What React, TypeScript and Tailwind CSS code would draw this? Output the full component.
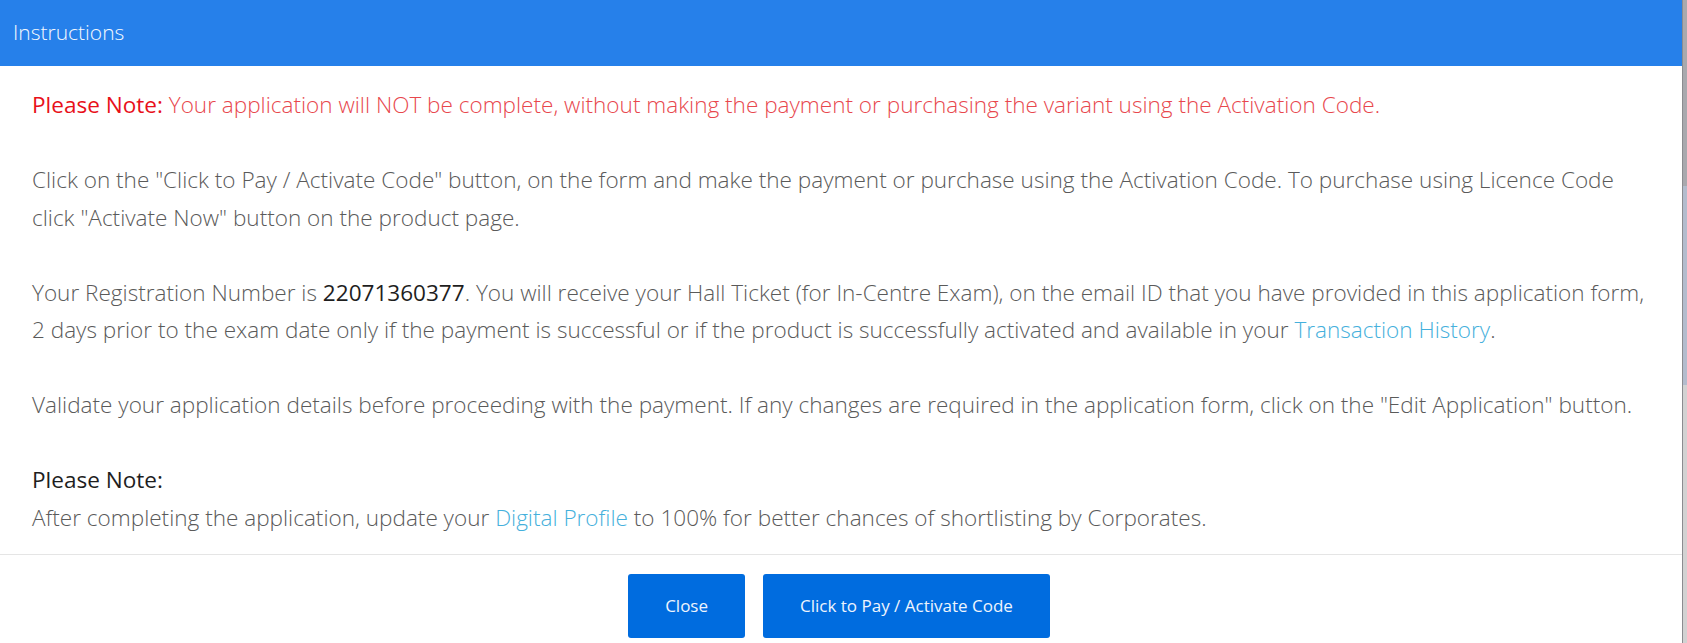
import { Fragment } from "react";

function Link({ children }: { children: string }) {
  return <a className="text-[#45b0dc] cursor-pointer">{children}</a>;
}

export default function App() {
  return (
    <div className="flex h-[643px] w-full overflow-hidden bg-white font-['Open_Sans',sans-serif]">
      <div className="flex min-w-0 flex-1 flex-col">
        <header className="flex h-[66px] items-center bg-[#2680ea] px-[13px] text-[21px] font-light text-[#f4f8fe]">
          Instructions
        </header>

        <div className="pl-[32px] pr-[16px] pt-[20px] pb-[18px] text-[22.55px] leading-[37.5px] font-light text-[#5a5a5a] whitespace-nowrap">
          <p className="text-[#e8474d]">
            <span className="font-normal text-[#e8101a]">Please Note:</span> Your application will NOT be
            complete, without making the payment or purchasing the variant using the Activation Code.
          </p>
          <br />
          <p>
            Click on the "Click to Pay / Activate Code" button, on the form and make the payment or purchase
            using the Activation Code. To purchase using Licence Code
            <br />
            click "Activate Now" button on the product page.
          </p>
          <br />
          <p>
            Your Registration Number is <span className="font-normal text-[#1e1e1e]">22071360377</span>. You will
            receive your Hall Ticket (for In-Centre Exam), on the email ID that you have provided in this
            application form,
            <br />
            2 days prior to the exam date only if the payment is successful or if the product is successfully
            activated and available in your <Link>Transaction History</Link>.
          </p>
          <br />
          <p>
            Validate your application details before proceeding with the payment. If any changes are required in
            the application form, click on the "Edit Application" button.
          </p>
          <br />
          <p className="font-normal text-[#1e1e1e]">Please Note:</p>
          <p>
            After completing the application, update your <Link>Digital Profile</Link> to 100% for better
            chances of shortlisting by Corporates.
          </p>
        </div>

        <div className="flex justify-center gap-[18px] border-t border-[#e5e5e5] pt-[19px] pr-[4px]">
          {["Close", "Click to Pay / Activate Code"].map((label) => (
            <Fragment key={label}>
              <button className="h-[64px] rounded-[3px] bg-[#006cdf] px-[37px] text-[17px] text-[#eef4fd]">
                {label}
              </button>
            </Fragment>
          ))}
        </div>
      </div>

      <div className="flex w-[5px] flex-col border-l border-[#8c8c90]">
        <div className="h-[186px] bg-[#a9a9ae]" />
        <div className="h-[199px] bg-[#b3bccd]" />
        <div className="flex-1 bg-[#d2d2d2]" />
      </div>
    </div>
  );
}
